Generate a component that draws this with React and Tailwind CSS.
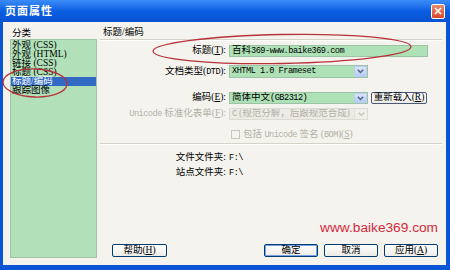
import React from 'react';

const categories = ['外观 (CSS)', '外观 (HTML)', '链接 (CSS)', '标题 (CSS)', '标题/编码', '跟踪图像'];

// SimSun-like latin: narrow monospaced serif
function M({ children }) {
  return <span className="font-['Liberation_Mono',monospace] text-[8.6px] tracking-[-0.5px]">{children}</span>;
}

function ComboArrow({ disabled }) {
  return (
    <div
      className={
        disabled
          ? 'w-[13px] h-full flex items-center justify-center bg-[#f0efe8] border-l border-[#e2e1da]'
          : 'w-[13px] h-full flex items-center justify-center bg-gradient-to-b from-[#dbe6fd] to-[#b6cbf6] border border-[#bccdf3] rounded-[1px]'
      }
    >
      <svg width="7" height="5" viewBox="0 0 7 5">
        <path d="M0.8 0.8 L3.5 3.6 L6.2 0.8" fill="none" stroke={disabled ? '#c9c7ba' : '#4d6185'} strokeWidth="1.4" />
      </svg>
    </div>
  );
}

function XpButton({ children, width = 'w-[54px]', focused }) {
  return (
    <div
      className={
        'h-[13px] ' +
        width +
        ' rounded-[2px] border border-[#003c74] bg-gradient-to-b from-[#ffffff] to-[#ecebe6] flex items-center justify-center leading-none ' +
        (focused ? 'shadow-[inset_0_0_0_1px_#7ba2e7]' : '')
      }
    >
      {children}
    </div>
  );
}

function Row({ label, labelClass = '', children, className = '' }) {
  return (
    <div className={'flex items-center ' + className}>
      <div className={'w-[126px] text-right leading-none whitespace-nowrap ' + labelClass}>{label}</div>
      <div className="ml-[3px] flex items-center h-full">{children}</div>
    </div>
  );
}

export default function App() {
  return (
    <div className="w-[450px] h-[270px] bg-[#0a54d6] flex flex-col relative overflow-hidden font-['Liberation_Serif','Noto_Sans_CJK_SC',serif] text-[9.5px] text-black">
      {/* title bar */}
      <div className="h-[22px] flex items-center justify-between pl-[5px] pr-[5px] bg-gradient-to-b from-[#3b8cf8] via-[#0a5ee2] to-[#0a52d0]">
        <span className="text-white font-bold text-[11px] tracking-[1px] leading-none">页面属性</span>
        <div className="w-[14px] h-[15px] rounded-[2px] bg-gradient-to-b from-[#e98a6c] to-[#d4472a] border border-white flex items-center justify-center">
          <svg width="8" height="8" viewBox="0 0 8 8">
            <path d="M1 1 L7 7 M7 1 L1 7" stroke="#ffffff" strokeWidth="1.6" />
          </svg>
        </div>
      </div>

      {/* dialog body */}
      <div className="flex-1 ml-[3px] mr-[4px] mb-[5px] bg-[#f4f3ee] flex">
        {/* left category list */}
        <div className="w-[97px] pl-[7px] pt-[6px] flex flex-col">
          <div className="h-[10px] leading-[10px] pl-[2px]">分类</div>
          <div className="mt-[1px] w-[87px] h-[219px] bg-[#b1e0b9] border border-[#9fc4a6] pt-[1px]">
            {categories.map((c, i) => (
              <div
                key={c}
                className={
                  'h-[9px] leading-[9px] pl-[1px] whitespace-nowrap ' +
                  (i === 4 ? 'bg-[#316ac5] text-white' : '')
                }
              >
                {c}
              </div>
            ))}
          </div>
        </div>

        {/* right pane */}
        <div className="flex-1 flex flex-col">
          <div className="h-[18px] pt-[5px] pl-[3px] mr-[4px] leading-[10px] border-b border-[#d5d3c8] shadow-[0_1px_0_#ffffff]">
            标题/编码
          </div>

          <Row label={<>标题(<u>T</u>):</>} className="mt-[5px] h-[12px]">
            <div className="w-[199px] h-[12px] bg-[#aee2b6] border border-[#9cc3a6] flex items-center pl-[2px] leading-none">
              百科<M>369-www.baike369.com</M>
            </div>
          </Row>

          <Row label={<>文档类型(<M>DTD</M>):</>} className="mt-[8px] h-[13px]">
            <div className="w-[139px] h-[13px] flex bg-[#aee2b6] border border-[#9cc3a6]">
              <div className="flex-1 flex items-center pl-[2px] leading-none">
                <M>XHTML 1.0 Frameset</M>
              </div>
              <ComboArrow />
            </div>
          </Row>

          <Row label={<>编码(<u>E</u>):</>} className="mt-[14px] h-[12px]">
            <div className="w-[139px] h-[12px] flex bg-[#aee2b6] border border-[#9cc3a6]">
              <div className="flex-1 flex items-center pl-[2px] leading-none">
                简体中文 <M>(GB2312)</M>
              </div>
              <ComboArrow />
            </div>
            <div className="ml-[3px] w-[56px] h-[12px] border border-[#4a5a78] rounded-[2px] bg-gradient-to-b from-white to-[#ecebe6] flex items-center justify-center leading-none">
              重新载入(<u>R</u>)
            </div>
          </Row>

          <Row label={<><M>Unicode</M> 标准化表单(<u>F</u>):</>} labelClass="text-[#b3b1a6]" className="mt-[4px] h-[12px]">
            <div className="w-[139px] h-[12px] flex bg-[#ecebe5] border border-[#dcdbd3] text-[#b3b1a6]">
              <div className="flex-1 flex items-center pl-[2px] leading-none whitespace-nowrap overflow-hidden">
                <M>C</M>&nbsp;(规范分解，后跟规范合成)
              </div>
              <ComboArrow disabled />
            </div>
          </Row>

          <Row label="" className="mt-[10px] h-[9px]">
            <div className="ml-[2px] w-[9px] h-[9px] border border-[#c9c7bb] bg-[#f4f3ee]" />
            <span className="ml-[3px] leading-none text-[#b3b1a6] whitespace-nowrap">
              包括 <M>Unicode</M> 签名 (<M>BOM</M>)(<u>S</u>)
            </span>
          </Row>

          <div className="mt-[4px] mr-[4px] border-b border-[#d5d3c8] shadow-[0_1px_0_#ffffff]" />

          <Row label="文件文件夹:" className="mt-[9px] h-[10px]">
            <span className="leading-none">
              <M>F:\</M>
            </span>
          </Row>
          <Row label="站点文件夹:" className="mt-[5px] h-[10px]">
            <span className="leading-none">
              <M>F:\</M>
            </span>
          </Row>

          <div className="mt-[43px] h-[14px] flex justify-end pr-[8px]">
            <span className="font-['Liberation_Sans',sans-serif] text-[13.7px] leading-[14px] text-[#d42a3c]">www.baike369.com</span>
          </div>

          <div className="mt-[9px] flex items-center pr-[8px]">
            <div className="ml-[12px]">
              <XpButton width="w-[55px]">
                帮助(<u>H</u>)
              </XpButton>
            </div>
            <div className="flex-1" />
            <div className="flex gap-[6px]">
              <XpButton focused>确定</XpButton>
              <XpButton>取消</XpButton>
              <XpButton>
                应用(<u>A</u>)
              </XpButton>
            </div>
          </div>
        </div>
      </div>

      {/* red hand-drawn marks */}
      <svg className="absolute inset-0 pointer-events-none" width="450" height="270" viewBox="0 0 450 270">
        <ellipse cx="282" cy="49" rx="129" ry="14.5" transform="rotate(-1 282 49)" fill="none" stroke="#b8323c" strokeWidth="1.3" />
        <ellipse cx="35" cy="83" rx="32" ry="14" transform="rotate(2 35 83)" fill="none" stroke="#b8323c" strokeWidth="1.3" />
      </svg>
    </div>
  );
}
